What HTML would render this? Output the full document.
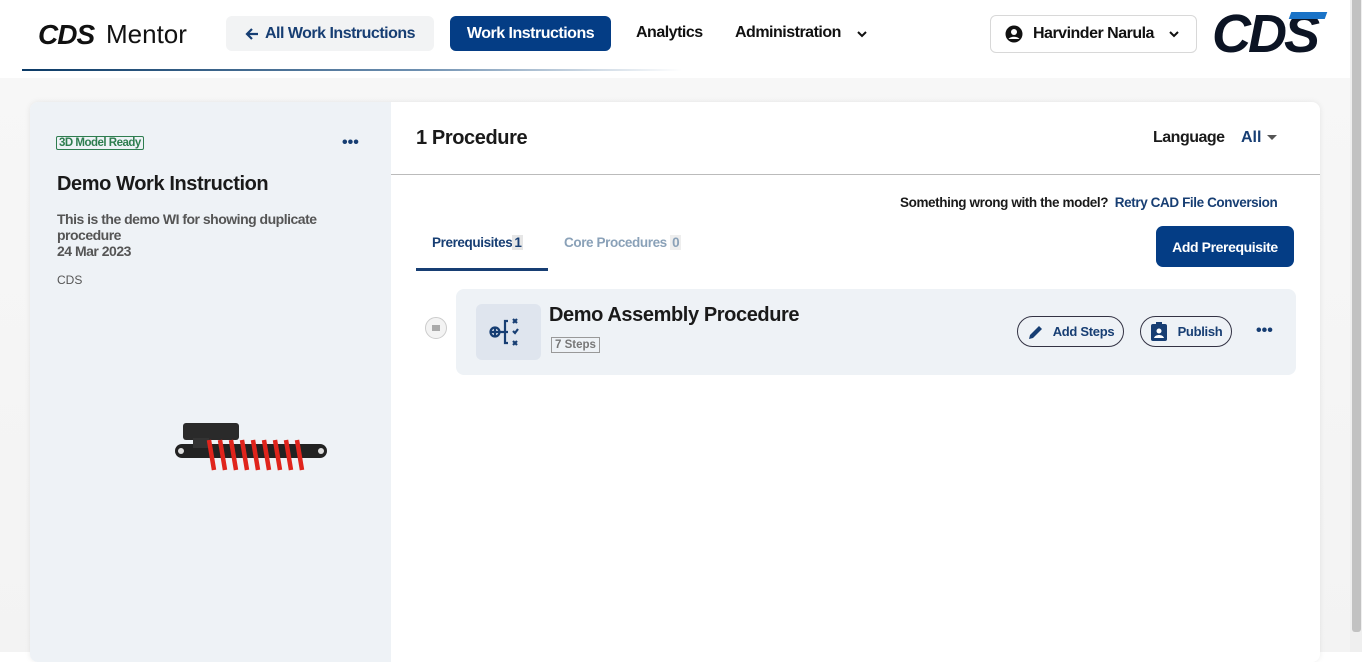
<!DOCTYPE html>
<html><head><meta charset="utf-8"><style>
*{box-sizing:border-box;margin:0;padding:0}
body{width:1362px;height:652px;overflow:hidden;background:#fff;font-family:"Liberation Sans",sans-serif;position:relative;color:#1a1a1a}
.abs{position:absolute}
.nav{font-weight:bold;font-size:16px;letter-spacing:-0.5px}
.btn{border-radius:6px;display:flex;align-items:center;justify-content:center}
</style></head><body>
<div class="abs" style="left:0;top:78px;width:1350px;height:574px;background:linear-gradient(#f7f7f7,#f3f3f3)"></div>
<div class="abs" style="left:1350px;top:0;width:12px;height:652px;background:#efefef"></div>
<div class="abs" style="left:1352px;top:0;width:9px;height:632px;background:#c2c2c2;border-radius:0 0 3px 3px"></div>
<!-- header -->
<div class="abs" style="left:38px;top:19px;font-size:28px;font-style:italic;font-weight:900;letter-spacing:-1px;color:#111">CDS</div>
<div class="abs" style="left:106px;top:19px;font-size:26px;color:#111">Mentor</div>
<div class="abs btn nav" style="left:226px;top:16px;width:208px;height:35px;background:#f2f3f4;color:#173e73">
<svg width="14" height="14" viewBox="0 0 14 14" style="margin-right:6px"><path d="M13 7H2M7 2L2 7l5 5" fill="none" stroke="#173e73" stroke-width="2.2"/></svg>All Work Instructions</div>
<div class="abs btn nav" style="left:450px;top:16px;width:161px;height:35px;background:#043d85;color:#fff">Work Instructions</div>
<div class="abs nav" style="left:636px;top:24px;color:#111">Analytics</div>
<div class="abs nav" style="left:735px;top:24px;color:#111">Administration</div>
<svg class="abs" style="left:856px;top:29px" width="12" height="10" viewBox="0 0 12 10"><path d="M2 3l4 4 4-4" fill="none" stroke="#111" stroke-width="2"/></svg>
<div class="abs" style="left:22px;top:69px;width:660px;height:2px;background:linear-gradient(90deg,#0b3a66,#6d8fb0 60%,rgba(200,210,220,0))"></div>
<div class="abs btn nav" style="left:990px;top:15px;width:207px;height:38px;border:1px solid #d8d8d8;background:#fff;color:#111;border-radius:6px;justify-content:flex-start;padding-left:14px">
<svg width="18" height="18" viewBox="0 0 18 18" style="margin-right:10px"><circle cx="9" cy="9" r="8.5" fill="#111"/><circle cx="9" cy="7" r="3" fill="#fff"/><path d="M3.5 14c2-3 9-3 11 0" fill="#fff"/></svg>Harvinder Narula
<svg width="12" height="10" viewBox="0 0 12 10" style="margin-left:14px"><path d="M2 3l4 4 4-4" fill="none" stroke="#111" stroke-width="2"/></svg></div>
<div class="abs" style="left:1212px;top:4px;font-size:54px;font-style:italic;font-weight:900;letter-spacing:-3px;color:#0c1424;line-height:60px">CDS</div>
<div class="abs" style="left:1290px;top:12px;width:36px;height:7px;background:#1a73c7;transform:skewX(-20deg)"></div>
<!-- card -->
<div class="abs" style="left:30px;top:102px;width:1290px;height:560px;background:#fff;border-radius:8px;box-shadow:0 0 6px rgba(0,0,0,.08);overflow:hidden">
 <div class="abs" style="left:0;top:0;width:361px;height:560px;background:#eef2f6"></div>
 <div class="abs" style="left:26px;top:34px;border:1px solid #2e7d4f;color:#2e7d4f;font-size:11.5px;font-weight:bold;padding:0 2px;border-radius:2px;letter-spacing:-0.5px">3D Model Ready</div>
 <div class="abs" style="left:312px;top:32px;font-weight:bold;color:#173e73">•••</div>
 <div class="abs" style="left:27px;top:71px;font-size:20px;font-weight:bold;letter-spacing:-0.4px">Demo Work Instruction</div>
 <div class="abs" style="left:27px;top:109px;font-size:14px;line-height:16px;color:#555;font-weight:bold;width:290px;letter-spacing:-0.5px">This is the demo WI for showing duplicate procedure<br>24 Mar 2023</div>
 <div class="abs" style="left:27px;top:171px;font-size:12px;color:#555">CDS</div>
 <!-- shock -->
 <svg class="abs" style="left:143px;top:318px" width="156" height="52" viewBox="0 0 156 52">
  <rect x="2" y="24" width="152" height="14" rx="7" fill="#222"/>
  <circle cx="8" cy="31" r="3" fill="#ddd"/><circle cx="148" cy="31" r="3" fill="#ddd"/>
  <rect x="10" y="3" width="56" height="17" rx="3" fill="#2a2a2a"/>
  <rect x="20" y="18" width="16" height="10" fill="#333"/>
  <g stroke="#e0241c" stroke-width="4.5" fill="none">
   <path d="M36 20l5 30M47 20l5 30M58 20l5 30M69 20l5 30M80 20l5 30M91 20l5 30M102 20l5 30M113 20l5 30M124 20l5 30"/>
  </g>
 </svg>
 <!-- right -->
 <div class="abs" style="left:386px;top:25px;font-size:20px;font-weight:bold;letter-spacing:-0.4px">1 Procedure</div>
 <div class="abs" style="left:1123px;top:27px;font-size:16px;font-weight:bold;letter-spacing:-0.5px">Language</div>
 <div class="abs" style="left:1211px;top:27px;font-size:16px;font-weight:bold;color:#173e73">All</div>
 <svg class="abs" style="left:1237px;top:33px" width="10" height="6"><path d="M0 0h10L5 5z" fill="#555"/></svg>
 <div class="abs" style="left:361px;top:72px;width:929px;height:1px;background:#bbb"></div>
 <div class="abs" style="left:870px;top:93px;font-size:13.5px;font-weight:bold;letter-spacing:-0.4px">Something wrong with the model? <span style="color:#173e73">&nbsp;Retry CAD File Conversion</span></div>
 <div class="abs" style="left:402px;top:133px;font-size:13.5px;font-weight:bold;color:#173e73;letter-spacing:-0.4px">Prerequisites<span style="background:#e6e6e6;padding:0 2px">1</span></div>
 <div class="abs" style="left:386px;top:166px;width:132px;height:3px;background:#173e73"></div>
 <div class="abs" style="left:534px;top:133px;font-size:13.5px;font-weight:bold;color:#8aa1b8;letter-spacing:-0.4px">Core Procedures <span style="background:#eee;padding:0 2px">0</span></div>
 <div class="abs btn" style="left:1126px;top:124px;width:138px;height:41px;background:#043d85;color:#fff;font-weight:bold;font-size:14px;border-radius:7px;letter-spacing:-0.4px">Add Prerequisite</div>
 <div class="abs" style="left:395px;top:215px;width:22px;height:22px;border-radius:50%;border:1px solid #ccc;background:#f3f3f3"><div class="abs" style="left:6px;top:7px;width:8px;height:6px;background:#aaa"></div></div>
 <div class="abs" style="left:426px;top:187px;width:840px;height:86px;background:#eef2f6;border-radius:8px"></div>
 <div class="abs" style="left:446px;top:202px;width:65px;height:56px;background:#dfe5ee;border-radius:6px"></div>
 <svg class="abs" style="left:458px;top:214px" width="40" height="32" viewBox="0 0 40 32"><g fill="none" stroke="#173e73" stroke-width="2.2">
  <circle cx="7" cy="16" r="4.5"/><path d="M7 11.5v9M2.5 16h9M11.5 16h5M20 5h-3v22h3M20 16h-3"/>
  <path d="M25 3l4 4M29 3l-4 4M25 15l2 2 3-4M25 25l4 4M29 25l-4 4"/></g></svg>
 <div class="abs" style="left:519px;top:202px;font-size:20px;font-weight:bold;letter-spacing:-0.4px">Demo Assembly Procedure</div>
 <div class="abs" style="left:521px;top:235px;font-size:11.5px;border:1px solid #999;color:#777;padding:1px 3px;font-weight:bold">7 Steps</div>
 <div class="abs btn" style="left:987px;top:214px;width:107px;height:31px;border:1px solid #334;border-radius:16px;font-size:13px;font-weight:bold;color:#173e73;letter-spacing:-0.3px">
  <svg width="18" height="18" viewBox="0 0 18 18" style="margin-right:8px"><path d="M2 16l1-4L12 3l3 3-9 9z" fill="#173e73"/></svg>Add Steps</div>
 <div class="abs btn" style="left:1110px;top:214px;width:92px;height:31px;border:1px solid #334;border-radius:16px;font-size:13px;font-weight:bold;color:#173e73;letter-spacing:-0.3px">
  <svg width="18" height="20" viewBox="0 0 18 20" style="margin-right:10px"><rect x="1" y="2" width="16" height="17" rx="2" fill="#173e73"/><rect x="6" y="0" width="6" height="4" fill="#173e73"/><circle cx="9" cy="9" r="2.5" fill="#fff"/><path d="M4 16c1-4 9-4 10 0z" fill="#fff"/></svg>Publish</div>
 <div class="abs" style="left:1226px;top:220px;font-weight:bold;color:#173e73">•••</div>
</div>
</body></html>
